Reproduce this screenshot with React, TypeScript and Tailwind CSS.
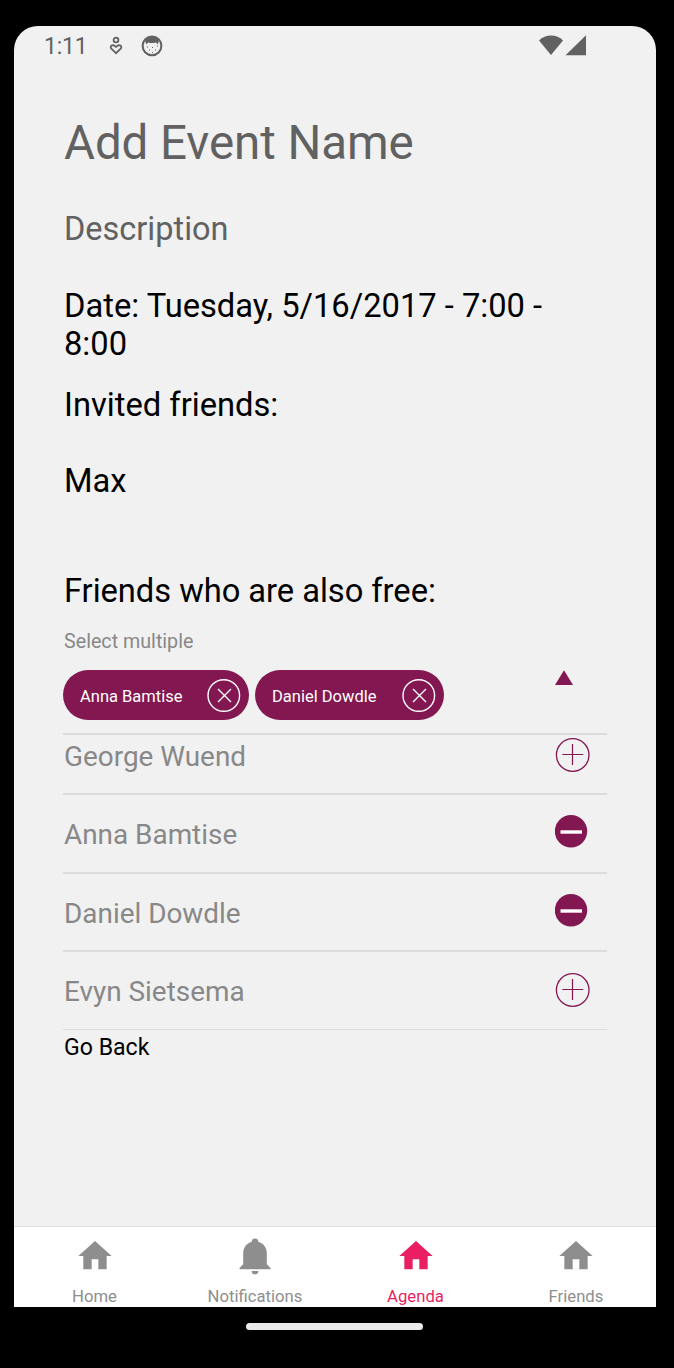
import {clsx} from 'clsx'

const FRIENDS = [
    {name: 'George Wuend', selected: false, row: 'h-[60px]', text: 'mt-[5px]', icon: 'mt-[2px]'},
    {name: 'Anna Bamtise', selected: true, row: 'h-[79px]', text: 'mt-[23px]', icon: 'mt-[19px]'},
    {name: 'Daniel Dowdle', selected: true, row: 'h-[78px]', text: 'mt-[23px]', icon: 'mt-[19px]'},
    {name: 'Evyn Sietsema', selected: false, row: 'h-[78px]', text: 'mt-[23px]', icon: 'mt-[20px]'},
]

const TABS = [
    {label: 'Home', icon: 'home', active: false},
    {label: 'Notifications', icon: 'bell', active: false},
    {label: 'Agenda', icon: 'home', active: true},
    {label: 'Friends', icon: 'home', active: false},
]

function HomeIcon() {
    return (
        <svg viewBox="0 0 24 24" className="size-10" fill="currentColor">
            <path d="M10 20v-6h4v6h5v-8h3L12 3 2 12h3v8z"/>
        </svg>
    )
}

function BellIcon() {
    return (
        <svg viewBox="0 0 40 40" className="size-10" fill="currentColor">
            <path d="M20 2.500a3.300 3.300 0 0 0-3.300 3.200C11.500 7.200 8.200 11.500 8.200 17v11.300L4.500 32v1.300h31V32l-3.700-3.700V17c0-5.500-3.300-9.800-8.500-11.300A3.300 3.300 0 0 0 20 2.500z"/>
            <path d="M16.600 34.900h6.800a3.400 3.400 0 0 1-6.800 0z"/>
        </svg>
    )
}

function PlusIcon() {
    return (
        <svg viewBox="0 0 36 36" className="ml-[492px] size-9" fill="none" stroke="#831751">
            <circle cx="17.700" cy="18" r="16.300" strokeWidth="1.300"/>
            <path d="M7.300 17.500h21M17.500 7v21" strokeWidth="1.200"/>
        </svg>
    )
}

function MinusIcon() {
    return (
        <svg viewBox="0 0 36 36" className="ml-[492px] size-9">
            <circle cx="16" cy="17.300" r="16.200" fill="#831751"/>
            <path d="M5.500 18h21.500" stroke="#fff" strokeWidth="3.400"/>
        </svg>
    )
}

function Chip({name, className}: { name: string, className: string }) {
    return (
        <div className={clsx('flex h-[50px] items-center justify-between rounded-full bg-[#831751] pr-2 pl-[17px] text-white', className)}>
            <span className="pt-[3px] text-[16.500px] leading-6 whitespace-nowrap">{name}</span>
            <svg viewBox="0 0 34 34" className="size-[34px]" fill="none" stroke="#fff">
                <circle cx="16.800" cy="17.500" r="15.800" strokeWidth="1.400"/>
                <path d="M11 11l13 13M24 11l-13 13" strokeWidth="1.400"/>
            </svg>
        </div>
    )
}

function StatusBar() {
    return (
        <div className="flex h-10 items-center pl-[30px] text-[#616161]">
            <span className="w-[65px] pt-0.5 text-[23px] leading-7 tracking-[-0.200px]">1:11</span>
            <svg viewBox="0 0 14 20" className="h-5 w-3.5" fill="none" stroke="currentColor" strokeWidth="1.800">
                <circle cx="7" cy="4" r="2.400"/>
                <path d="M7 17.200L2.300 12.600C.2 10.200 3.700 7.400 7 11c3.300-3.600 6.800-.8 4.700 1.600z"/>
            </svg>
            <svg viewBox="0 0 22 22" className="ml-[18px] size-[22px]">
                <circle cx="11" cy="10.800" r="9.400" fill="none" stroke="currentColor" strokeWidth="2"/>
                <path d="M4 6C7 0 15 0 18 6L16.500 9.500 15 7.500 12.500 8H9.500L7 7.500 5.500 9.500z" fill="currentColor"/>
                <path d="M6 12h1M8 15h1M11 12.500h1M14 15h1M16 11h1M11 17.500h1" stroke="currentColor"/>
            </svg>
            <svg viewBox="0 0 48 22" className="ml-[376px] h-[22px] w-12" fill="currentColor">
                <path d="M0 5.500C6.500-1.300 18-1.300 24 5.500L12 20z"/>
                <path d="M47 .2v20H26.500z"/>
            </svg>
        </div>
    )
}

export default function App() {
    return (
        <div className="h-[1368px] w-[674px] overflow-hidden bg-black pt-[26px] pl-[14px] font-['Roboto',sans-serif]">
            <div className="flex h-[1281px] w-[642px] flex-col overflow-hidden rounded-t-[24px] bg-[#f1f1f1]">
                <StatusBar/>

                <main className="flex-1 pt-[47px] pr-[49px] pl-[49px]">
                    <h1 className="pl-px text-[47.500px] leading-[60px] tracking-[-0.080px] text-[#616161]">Add Event Name</h1>
                    <p className="mt-[37px] pl-px text-[32.500px] leading-[38px] text-[#616161]">Description</p>

                    <div className="pl-px text-[32.700px] leading-[38px] text-black">
                        <p className="mt-[39px]">Date: Tuesday, 5/16/2017 - 7:00 -<br/>8:00</p>
                        <p className="mt-[23px]">Invited friends:</p>
                        <p className="mt-[38px]">Max</p>
                        <p className="mt-[72px] tracking-[-0.040px]">Friends who are also free:</p>
                    </div>

                    <p className="mt-5 pl-px text-[19.700px] leading-6 text-[#888]">Select multiple</p>
                    <div className="mt-4 flex h-[65px] border-b-2 border-[#dcdcdc]">
                        <Chip name="Anna Bamtise" className="w-[186px]"/>
                        <Chip name="Daniel Dowdle" className="ml-1.5 w-[189px]"/>
                        <svg viewBox="0 0 18 15" className="ml-[111px] h-[15px] w-[18px]" fill="#831751">
                            <path d="M9 .3l9 14.700H0z"/>
                        </svg>
                    </div>

                    <ul>
                        {FRIENDS.map(({name, selected, row, text, icon}) => (
                            <li key={name} className={clsx('grid border-b-2 border-[#dcdcdc] last:border-b', row)}>
                                <span className={clsx('col-start-1 row-start-1 pl-px text-[27.900px] leading-[34px] text-[#888]', text)}>
                                    {name}
                                </span>
                                <div className={clsx('col-start-1 row-start-1', icon)}>
                                    {selected ? <MinusIcon/> : <PlusIcon/>}
                                </div>
                            </li>
                        ))}
                    </ul>

                    <button className="mt-1 block pl-px text-[23.100px] leading-7 text-black">Go Back</button>
                </main>

                <nav className="grid h-[81px] grid-cols-4 border-t border-[#e0e0e0] bg-white">
                    {TABS.map(({label, icon, active}) => (
                        <div
                            key={label}
                            className={clsx('flex flex-col items-center pt-[9px] pl-[0.500px]', active ? 'text-[#e91e63]' : 'text-[#8e8e8e]')}
                        >
                            {icon === 'bell' ? <BellIcon/> : <HomeIcon/>}
                            <span className="mt-[11px] text-[16.700px] leading-5">{label}</span>
                        </div>
                    ))}
                </nav>
            </div>

            {/* Gesture bar */}
            <div className="mt-4 ml-[232px] h-[7px] w-[177px] rounded-full bg-[#ebebeb]"/>
        </div>
    )
}
